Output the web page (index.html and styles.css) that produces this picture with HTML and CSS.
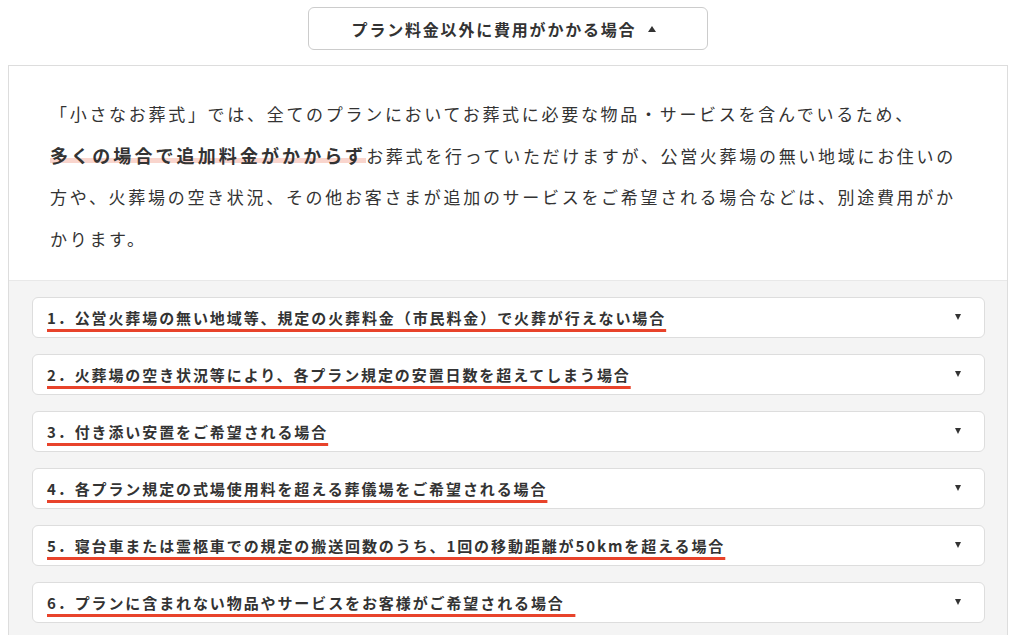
FILE: index.html
```html
<!DOCTYPE html>
<html lang="ja">
  <head>
    <meta charset="UTF-8" />
    <meta name="viewport" content="width=device-width, initial-scale=1.0" />
    <title>プラン料金以外に費用がかかる場合</title>
    <link rel="stylesheet" href="styles.css">
  </head>
  <body>
    <div class="wrap">
      <button class="toggle">プラン料金以外に費用がかかる場合<span class="arrow-up"></span></button>

      <div class="extra-box">
        <div class="intro">
          <p>「小さなお葬式」では、全てのプランにおいてお葬式に必要な物品・サービスを含んでいるため、<br><strong class="marker">多くの場合で追加料金がかからず</strong>お葬式を行っていただけますが、公営火葬場の無い地域にお住いの方や、火葬場の空き状況、その他お客さまが追加のサービスをご希望される場合などは、別途費用がかかります。</p>
        </div>

        <div class="cases">
          <div class="case">
            <span class="case-title">1．公営火葬場の無い地域等、規定の火葬料金（市民料金）で火葬が行えない場合</span>
            <span class="arrow-down"></span>
          </div>
          <div class="case">
            <span class="case-title">2．火葬場の空き状況等により、各プラン規定の安置日数を超えてしまう場合</span>
            <span class="arrow-down"></span>
          </div>
          <div class="case">
            <span class="case-title">3．付き添い安置をご希望される場合</span>
            <span class="arrow-down"></span>
          </div>
          <div class="case">
            <span class="case-title">4．各プラン規定の式場使用料を超える葬儀場をご希望される場合</span>
            <span class="arrow-down"></span>
          </div>
          <div class="case">
            <span class="case-title">5．寝台車または霊柩車での規定の搬送回数のうち、1回の移動距離が50kmを超える場合</span>
            <span class="arrow-down"></span>
          </div>
          <div class="case">
            <span class="case-title">6．プランに含まれない物品やサービスをお客様がご希望される場合&nbsp;&nbsp;</span>
            <span class="arrow-down"></span>
          </div>
        </div>
      </div>
    </div>
  </body>
</html>
```

FILE: styles.css
```css
* {
  margin: 0;
  padding: 0;
  box-sizing: border-box;
  font-family: "Noto Sans CJK JP", "Noto Sans", sans-serif;
}

body {
  background-color: #ffffff;
  color: #333333;
  padding: 7px 0 0 8px;
}

.wrap {
  width: 1000px;
}

.toggle {
  display: flex;
  align-items: center;
  justify-content: center;
  width: 400px;
  height: 43px;
  margin: 0 auto;
  padding-right: 8px;
  background: #ffffff;
  border: 1px solid #cccccc;
  border-radius: 6px;
  color: #333333;
  font-size: 16px;
  font-weight: bold;
  letter-spacing: 1.8px;
  cursor: pointer;
}

.arrow-up {
  display: inline-block;
  width: 0;
  height: 0;
  margin-left: 12px;
  border-left: 4px solid transparent;
  border-right: 4px solid transparent;
  border-bottom: 6px solid #333333;
}

.extra-box {
  margin-top: 15px;
  border: 1px solid #dddddd;
  background: #ffffff;
}

.intro {
  padding: 27px 41px 20px;
}

.intro p {
  font-size: 17px;
  line-height: 41.7px;
  letter-spacing: 2.7px;
  color: #333333;
}

.marker {
  font-size: 18px;
  letter-spacing: 3.1px;
  background: linear-gradient(transparent 62%, #f9d5cd 62%, #f9d5cd 82%, transparent 82%);
}

.cases {
  display: flex;
  flex-direction: column;
  gap: 16px;
  padding: 16px 22px 16px 23px;
  background: #f4f4f4;
  border-top: 1px solid #e8e8e8;
}

.case {
  display: flex;
  align-items: center;
  justify-content: space-between;
  height: 41px;
  padding: 0 23px 0 14px;
  background: #ffffff;
  border: 1px solid #dddddd;
  border-radius: 6px;
}

.case-title {
  font-size: 15px;
  font-weight: bold;
  letter-spacing: 1.9px;
  color: #333333;
  text-decoration: underline;
  text-decoration-color: #e8432b;
  text-decoration-thickness: 3px;
  text-underline-offset: 5px;
}

.arrow-down {
  width: 0;
  height: 0;
  border-left: 3.5px solid transparent;
  border-right: 3.5px solid transparent;
  border-top: 6px solid #333333;
}
```
